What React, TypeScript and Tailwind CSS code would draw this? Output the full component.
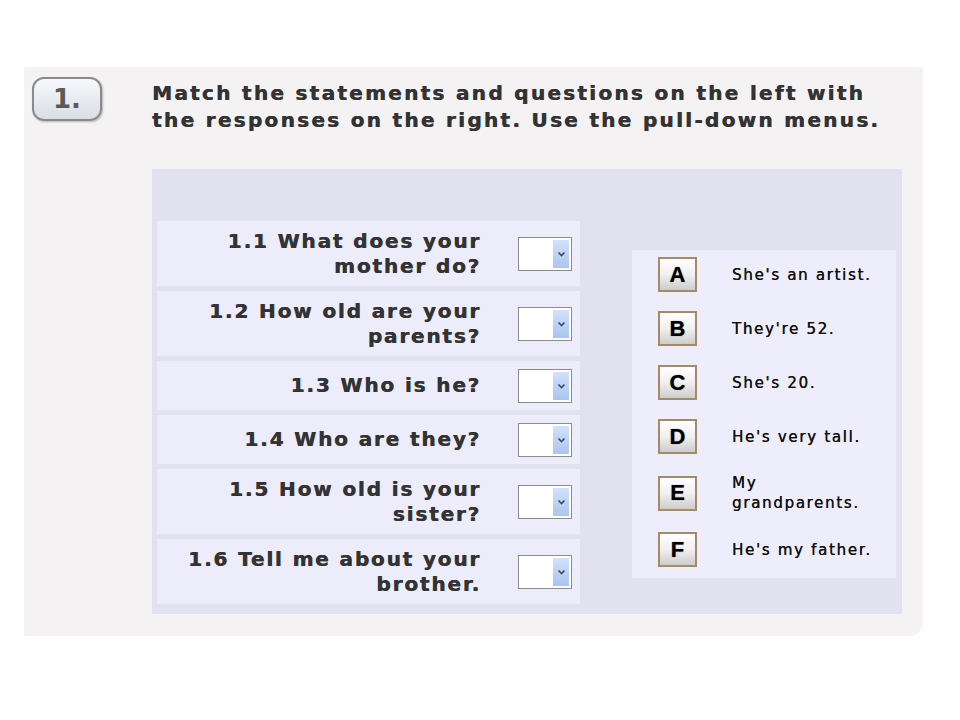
import React from 'react';

const questions = [
    {id: '1.1', lines: ['1.1 What does your', 'mother do?']},
    {id: '1.2', lines: ['1.2 How old are your', 'parents?']},
    {id: '1.3', lines: ['1.3 Who is he?']},
    {id: '1.4', lines: ['1.4 Who are they?']},
    {id: '1.5', lines: ['1.5 How old is your', 'sister?']},
    {id: '1.6', lines: ['1.6 Tell me about your', 'brother.']},
];

const responses = [
    {letter: 'A', text: ["She's an artist."]},
    {letter: 'B', text: ["They're 52."]},
    {letter: 'C', text: ["She's 20."]},
    {letter: 'D', text: ["He's very tall."]},
    {letter: 'E', text: ['My', 'grandparents.']},
    {letter: 'F', text: ["He's my father."]},
];

function PullDown() {
    return (
        <div className="flex h-[34px] w-[54px] shrink-0 border border-[#8c8c8c] bg-white p-[2px]">
            <div className="flex-1 bg-white"/>
            <div className="flex w-[16px] items-center justify-center bg-gradient-to-b from-[#d3e1fa] to-[#aac5ef]">
                <svg width="9" height="6" viewBox="0 0 9 6">
                    <path d="M1.5 1.5 L4.5 4.5 L7.5 1.5" fill="none" stroke="#3d4a6b" strokeWidth="1.7"/>
                </svg>
            </div>
        </div>
    );
}

function LetterBox(props: { letter: string }) {
    return (
        <div
            className="flex h-[35px] w-[39px] shrink-0 items-center justify-center border-2 border-[#a48b68] bg-gradient-to-b from-[#ffffff] via-[#f0f0f0] to-[#cdcdcd] text-[22px] font-bold leading-none text-black [text-shadow:0_0_1px_rgba(0,0,0,0.6)]"
            style={{fontFamily: '"Liberation Sans", Arial, sans-serif'}}>
            {props.letter}
        </div>
    );
}

export default function App() {
    return (
        <div className="min-h-[720px] w-[960px] bg-white pt-[67px] pl-[24px]"
             style={{fontFamily: '"DejaVu Sans", Verdana, sans-serif'}}>
            <div className="flex h-[569px] w-[899px] rounded-br-[14px] bg-[#f4f2f3]">
                <div className="w-[128px] shrink-0 pl-[8px] pt-[10px]">
                    <div
                        className="flex h-[44px] w-[70px] items-center justify-center rounded-[12px] border-2 border-[#8a8a8a] bg-gradient-to-b from-[#f7f9fb] to-[#d9dee5] text-[26px] font-bold text-[#5a5a5a] shadow-[1px_1px_2px_rgba(0,0,0,0.25)]">
                        1.
                    </div>
                </div>
                <div className="flex flex-col">
                    <h1 className="pt-[13px] text-[20px] font-bold leading-[27px] tracking-[2.3px] text-[#333] [text-shadow:0.5px_0_0_#333]">
                        Match the statements and questions on the left with<br/>
                        the responses on the right. Use the pull-down menus.
                    </h1>
                    <div className="mt-[35px] flex w-[750px] items-start gap-[52px] bg-[#e2e1f0] px-[5px] pt-[52px] pb-[10px]">
                        <div className="flex w-[423px] flex-col gap-[5px]">
                            {questions.map((q) => (
                                <div key={q.id}
                                     className="flex items-center bg-[#ececfb] py-[7.5px] pr-[8px] pl-[6px]">
                                    <div
                                        className="-mr-[2px] flex-1 text-right text-[20px] font-bold leading-[25px] tracking-[1.85px] text-[#333] [text-shadow:0.5px_0_0_#333]">
                                        {q.lines.map((l, i) => (
                                            <div key={i}>{l}</div>
                                        ))}
                                    </div>
                                    <div className="ml-[39px] flex min-h-[34px] items-center">
                                        <PullDown/>
                                    </div>
                                </div>
                            ))}
                        </div>
                        <div className="mt-[29px] flex w-[264px] flex-col gap-[19px] bg-[#ededfb] pt-[7px] pb-[11px] pl-[26px]">
                            {responses.map((r) => (
                                <div key={r.letter} className="flex items-center gap-[35px]">
                                    <LetterBox letter={r.letter}/>
                                    <div className="text-[15px] leading-[20px] tracking-[1.7px] text-[#111] [text-shadow:0.3px_0_0_#111]">
                                        {r.text.map((t, i) => (
                                            <div key={i}>{t}</div>
                                        ))}
                                    </div>
                                </div>
                            ))}
                        </div>
                    </div>
                </div>
            </div>
        </div>
    );
}
